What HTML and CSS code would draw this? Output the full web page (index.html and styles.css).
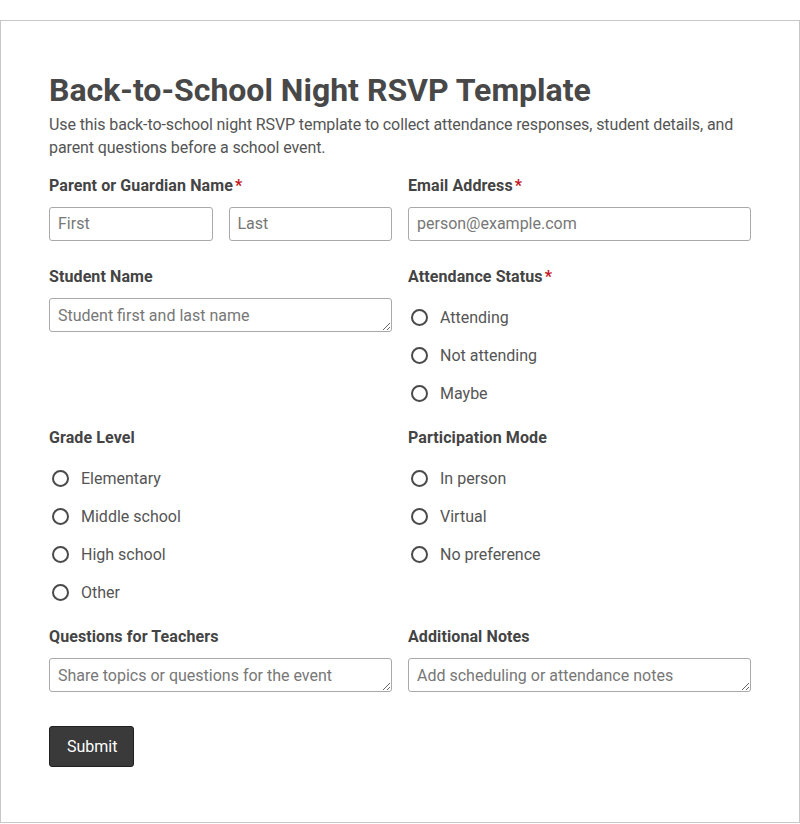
FILE: index.html
```html
<!DOCTYPE html>
<html lang="en">

<head>
  <meta charset="UTF-8">
  <meta name="viewport" content="width=device-width, initial-scale=1.0">
  <title>Back-to-School Night RSVP Template</title>
  <link rel="stylesheet" href="styles.css">
</head>

<body>
  <!-- rsvp form -->
  <form class="rsvp">
    <h1 class="title">Back-to-School Night RSVP Template</h1>
    <p class="intro">Use this back-to-school night RSVP template to collect attendance responses, student details, and parent questions before a school event.</p>

    <div class="fields">
      <div class="field">
        <label class="fieldLabel">Parent or Guardian Name<span class="req">*</span></label>
        <div class="nameRow">
          <input class="textIn" type="text" placeholder="First">
          <input class="textIn" type="text" placeholder="Last">
        </div>
      </div>
      <div class="field">
        <label class="fieldLabel">Email Address<span class="req">*</span></label>
        <input class="textIn" type="email" placeholder="person@example.com">
      </div>

      <div class="field">
        <label class="fieldLabel">Student Name</label>
        <textarea class="textIn area" rows="1" placeholder="Student first and last name"></textarea>
      </div>
      <div class="field">
        <label class="fieldLabel">Attendance Status<span class="req">*</span></label>
        <div class="options">
          <label class="opt"><input type="radio" name="status"><span>Attending</span></label>
          <label class="opt"><input type="radio" name="status"><span>Not attending</span></label>
          <label class="opt"><input type="radio" name="status"><span>Maybe</span></label>
        </div>
      </div>

      <div class="field">
        <label class="fieldLabel">Grade Level</label>
        <div class="options">
          <label class="opt"><input type="radio" name="grade"><span>Elementary</span></label>
          <label class="opt"><input type="radio" name="grade"><span>Middle school</span></label>
          <label class="opt"><input type="radio" name="grade"><span>High school</span></label>
          <label class="opt"><input type="radio" name="grade"><span>Other</span></label>
        </div>
      </div>
      <div class="field">
        <label class="fieldLabel">Participation Mode</label>
        <div class="options">
          <label class="opt"><input type="radio" name="mode"><span>In person</span></label>
          <label class="opt"><input type="radio" name="mode"><span>Virtual</span></label>
          <label class="opt"><input type="radio" name="mode"><span>No preference</span></label>
        </div>
      </div>

      <div class="field">
        <label class="fieldLabel">Questions for Teachers</label>
        <textarea class="textIn area" rows="1" placeholder="Share topics or questions for the event"></textarea>
      </div>
      <div class="field">
        <label class="fieldLabel">Additional Notes</label>
        <textarea class="textIn area" rows="1" placeholder="Add scheduling or attendance notes"></textarea>
      </div>
    </div>

    <button class="submitBt" type="button">Submit</button>
  </form>
</body>

</html>
```

FILE: styles.css
```css
body {
  margin: 0;
  padding-top: 20px;
  background: white;
  font-family: Roboto, "Liberation Sans", sans-serif;
  color: #444;
}

.rsvp {
  box-sizing: border-box;
  width: 800px;
  border: 1px solid #c8c8c8;
  padding: 50px 48px 55px;
}

.title {
  margin: 0;
  font-size: 32px;
  line-height: 38px;
  font-weight: 700;
  color: #484848;
}

.intro {
  margin: 4px 0 17px;
  font-size: 16px;
  line-height: 23px;
  letter-spacing: -0.1px;
  color: #555;
}

.fields {
  display: grid;
  grid-template-columns: 1fr 1fr;
  column-gap: 16px;
  row-gap: 16px;
}

.field {
  display: flex;
  flex-direction: column;
  min-width: 0;
}

.fieldLabel {
  font-size: 16px;
  line-height: 19px;
  font-weight: 700;
  letter-spacing: 0.1px;
  color: #444;
  margin-bottom: 12px;
}

.req {
  color: #c4161c;
  margin-left: 2px;
}

.nameRow {
  display: grid;
  grid-template-columns: 1fr 1fr;
  gap: 16px;
}

.textIn {
  display: block;
  box-sizing: border-box;
  width: 100%;
  height: 34px;
  margin: 0 0 10px;
  padding: 6px 8px 8px;
  border: 1px solid #a9a9a9;
  border-radius: 3px;
  font-family: Roboto, "Liberation Sans", sans-serif;
  font-size: 16px;
  line-height: 18px;
  color: #444;
  background: white;
}

.textIn::placeholder {
  color: #777;
}

.area {
  padding: 8px 8px 6px;
  resize: vertical;
  overflow: hidden;
}

.options {
  display: flex;
  flex-direction: column;
}

.opt {
  display: flex;
  align-items: center;
  height: 38px;
  font-size: 16px;
  color: #555;
  cursor: pointer;
}

.opt input {
  appearance: none;
  -webkit-appearance: none;
  box-sizing: border-box;
  width: 17px;
  height: 17px;
  margin: 0 12px 0 3px;
  border: 2px solid #4a4a4a;
  border-radius: 50%;
  background: white;
}

.submitBt {
  display: block;
  margin-top: 24px;
  padding: 0 16px 0 17px;
  height: 41px;
  border: 1px solid #1f1f1f;
  border-radius: 3px;
  background: #3a3a3a;
  color: white;
  font-family: Roboto, "Liberation Sans", sans-serif;
  font-size: 16px;
  cursor: pointer;
}
```
